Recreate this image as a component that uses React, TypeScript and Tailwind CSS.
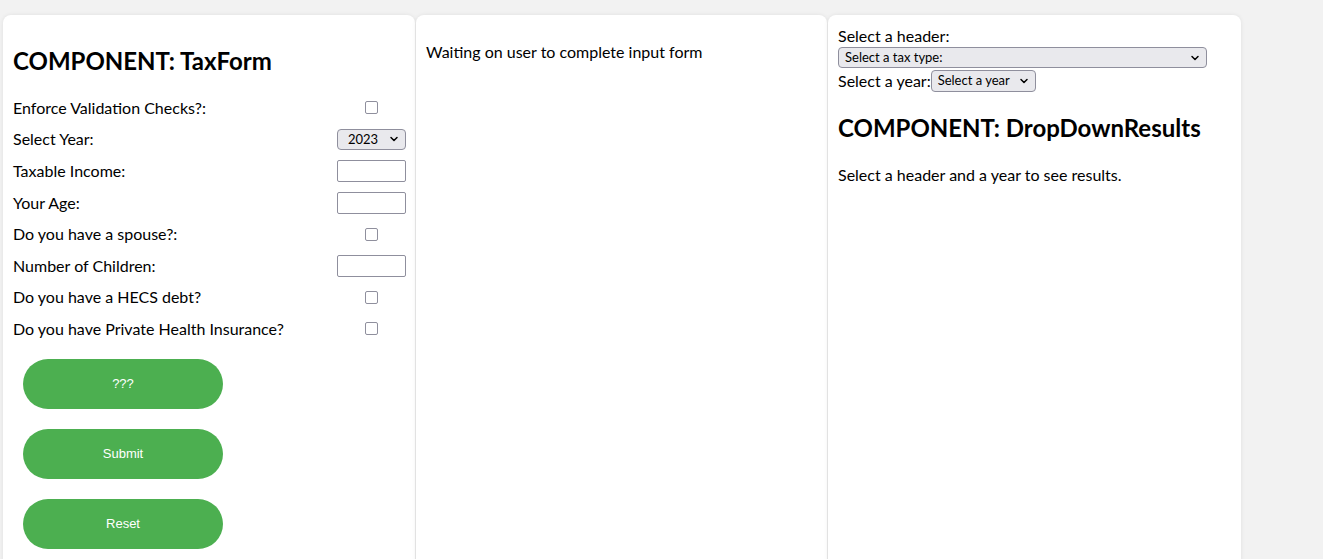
import { ChevronDown } from 'lucide-react'

const font = { fontFamily: 'Lato, "Noto Sans", sans-serif' }

type Row = {
  label: string
  kind: 'check' | 'text' | 'year'
}

const rows: Row[] = [
  { label: 'Enforce Validation Checks?:', kind: 'check' },
  { label: 'Select Year:', kind: 'year' },
  { label: 'Taxable Income:', kind: 'text' },
  { label: 'Your Age:', kind: 'text' },
  { label: 'Do you have a spouse?:', kind: 'check' },
  { label: 'Number of Children:', kind: 'text' },
  { label: 'Do you have a HECS debt?', kind: 'check' },
  { label: 'Do you have Private Health Insurance?', kind: 'check' },
]

function Select({ text, className }: { text: string; className: string }) {
  return (
    <div
      className={`flex items-center justify-between rounded-[4px] border border-[#8f8f9d] bg-[#e9e9ed] pl-[6px] pr-[5px] text-[13px] text-black ${className}`}
    >
      <span className="leading-none">{text}</span>
      <ChevronDown size={12} strokeWidth={3} />
    </div>
  )
}

function Control({ kind }: { kind: Row['kind'] }) {
  if (kind === 'check') {
    return (
      <div className="flex w-[69px] justify-center">
        <div className="h-[13px] w-[13px] rounded-[2px] border-[1.5px] border-[#8f8f9d] bg-white" />
      </div>
    )
  }
  if (kind === 'year') {
    return <Select text="2023" className="h-[21px] w-[69px] pl-[10px]" />
  }
  return <div className="h-[22px] w-[69px] rounded-[2px] border border-[#8f8f9d] bg-white" />
}

function GreenButton({ label }: { label: string }) {
  return (
    <button
      className="flex h-[50px] w-[200px] items-center justify-center rounded-[25px] bg-[#4caf50] text-[13px] text-white"
      style={{ fontFamily: '"Liberation Sans", Arial, sans-serif' }}
    >
      {label}
    </button>
  )
}

export default function App() {
  return (
    <div className="h-[559px] overflow-hidden bg-[#f2f2f2] text-black" style={font}>
      <div className="flex gap-[1px] pl-[3px] pt-[15px]">
        <div className="h-[560px] w-[412px] rounded-t-[8px] bg-white py-[10px] pl-[10px] pr-[9px] shadow-[0_0_4px_rgba(0,0,0,0.08)]">
          <h2 className="mb-[15px] mt-[20px] text-[24px] font-bold leading-[32px]">COMPONENT: TaxForm</h2>
          {rows.map((row) => (
            <div key={row.label} className="flex h-[31.6px] items-center justify-between text-[16px]">
              <span>{row.label}</span>
              <Control kind={row.kind} />
            </div>
          ))}
          <div className="ml-[10px] mt-[14px] flex flex-col gap-[20px]">
            <GreenButton label="???" />
            <GreenButton label="Submit" />
            <GreenButton label="Reset" />
          </div>
        </div>

        <div className="h-[560px] w-[411px] rounded-t-[8px] bg-white px-[10px] py-[10px] shadow-[0_0_4px_rgba(0,0,0,0.08)]">
          <p className="mb-4 mt-[15px] text-[16px] leading-[24px]">Waiting on user to complete input form</p>
        </div>

        <div className="h-[560px] w-[413px] rounded-t-[8px] bg-white px-[10px] pb-[10px] pt-[9px] shadow-[0_0_4px_rgba(0,0,0,0.08)]">
          <div className="text-[16px] leading-[23px]">Select a header:</div>
          <Select text="Select a tax type:" className="h-[21px] w-[369px]" />
          <div className="mt-[1px] flex items-center text-[16px] leading-[23px]">
            <span>Select a year:</span>
            <Select text="Select a year" className="h-[22px] w-[105px]" />
          </div>
          <h2 className="mb-[19px] mt-[20px] text-[24px] font-bold leading-[32px]">COMPONENT: DropDownResults</h2>
          <p className="text-[16px] leading-[24px]">Select a header and a year to see results.</p>
        </div>
      </div>
    </div>
  )
}
